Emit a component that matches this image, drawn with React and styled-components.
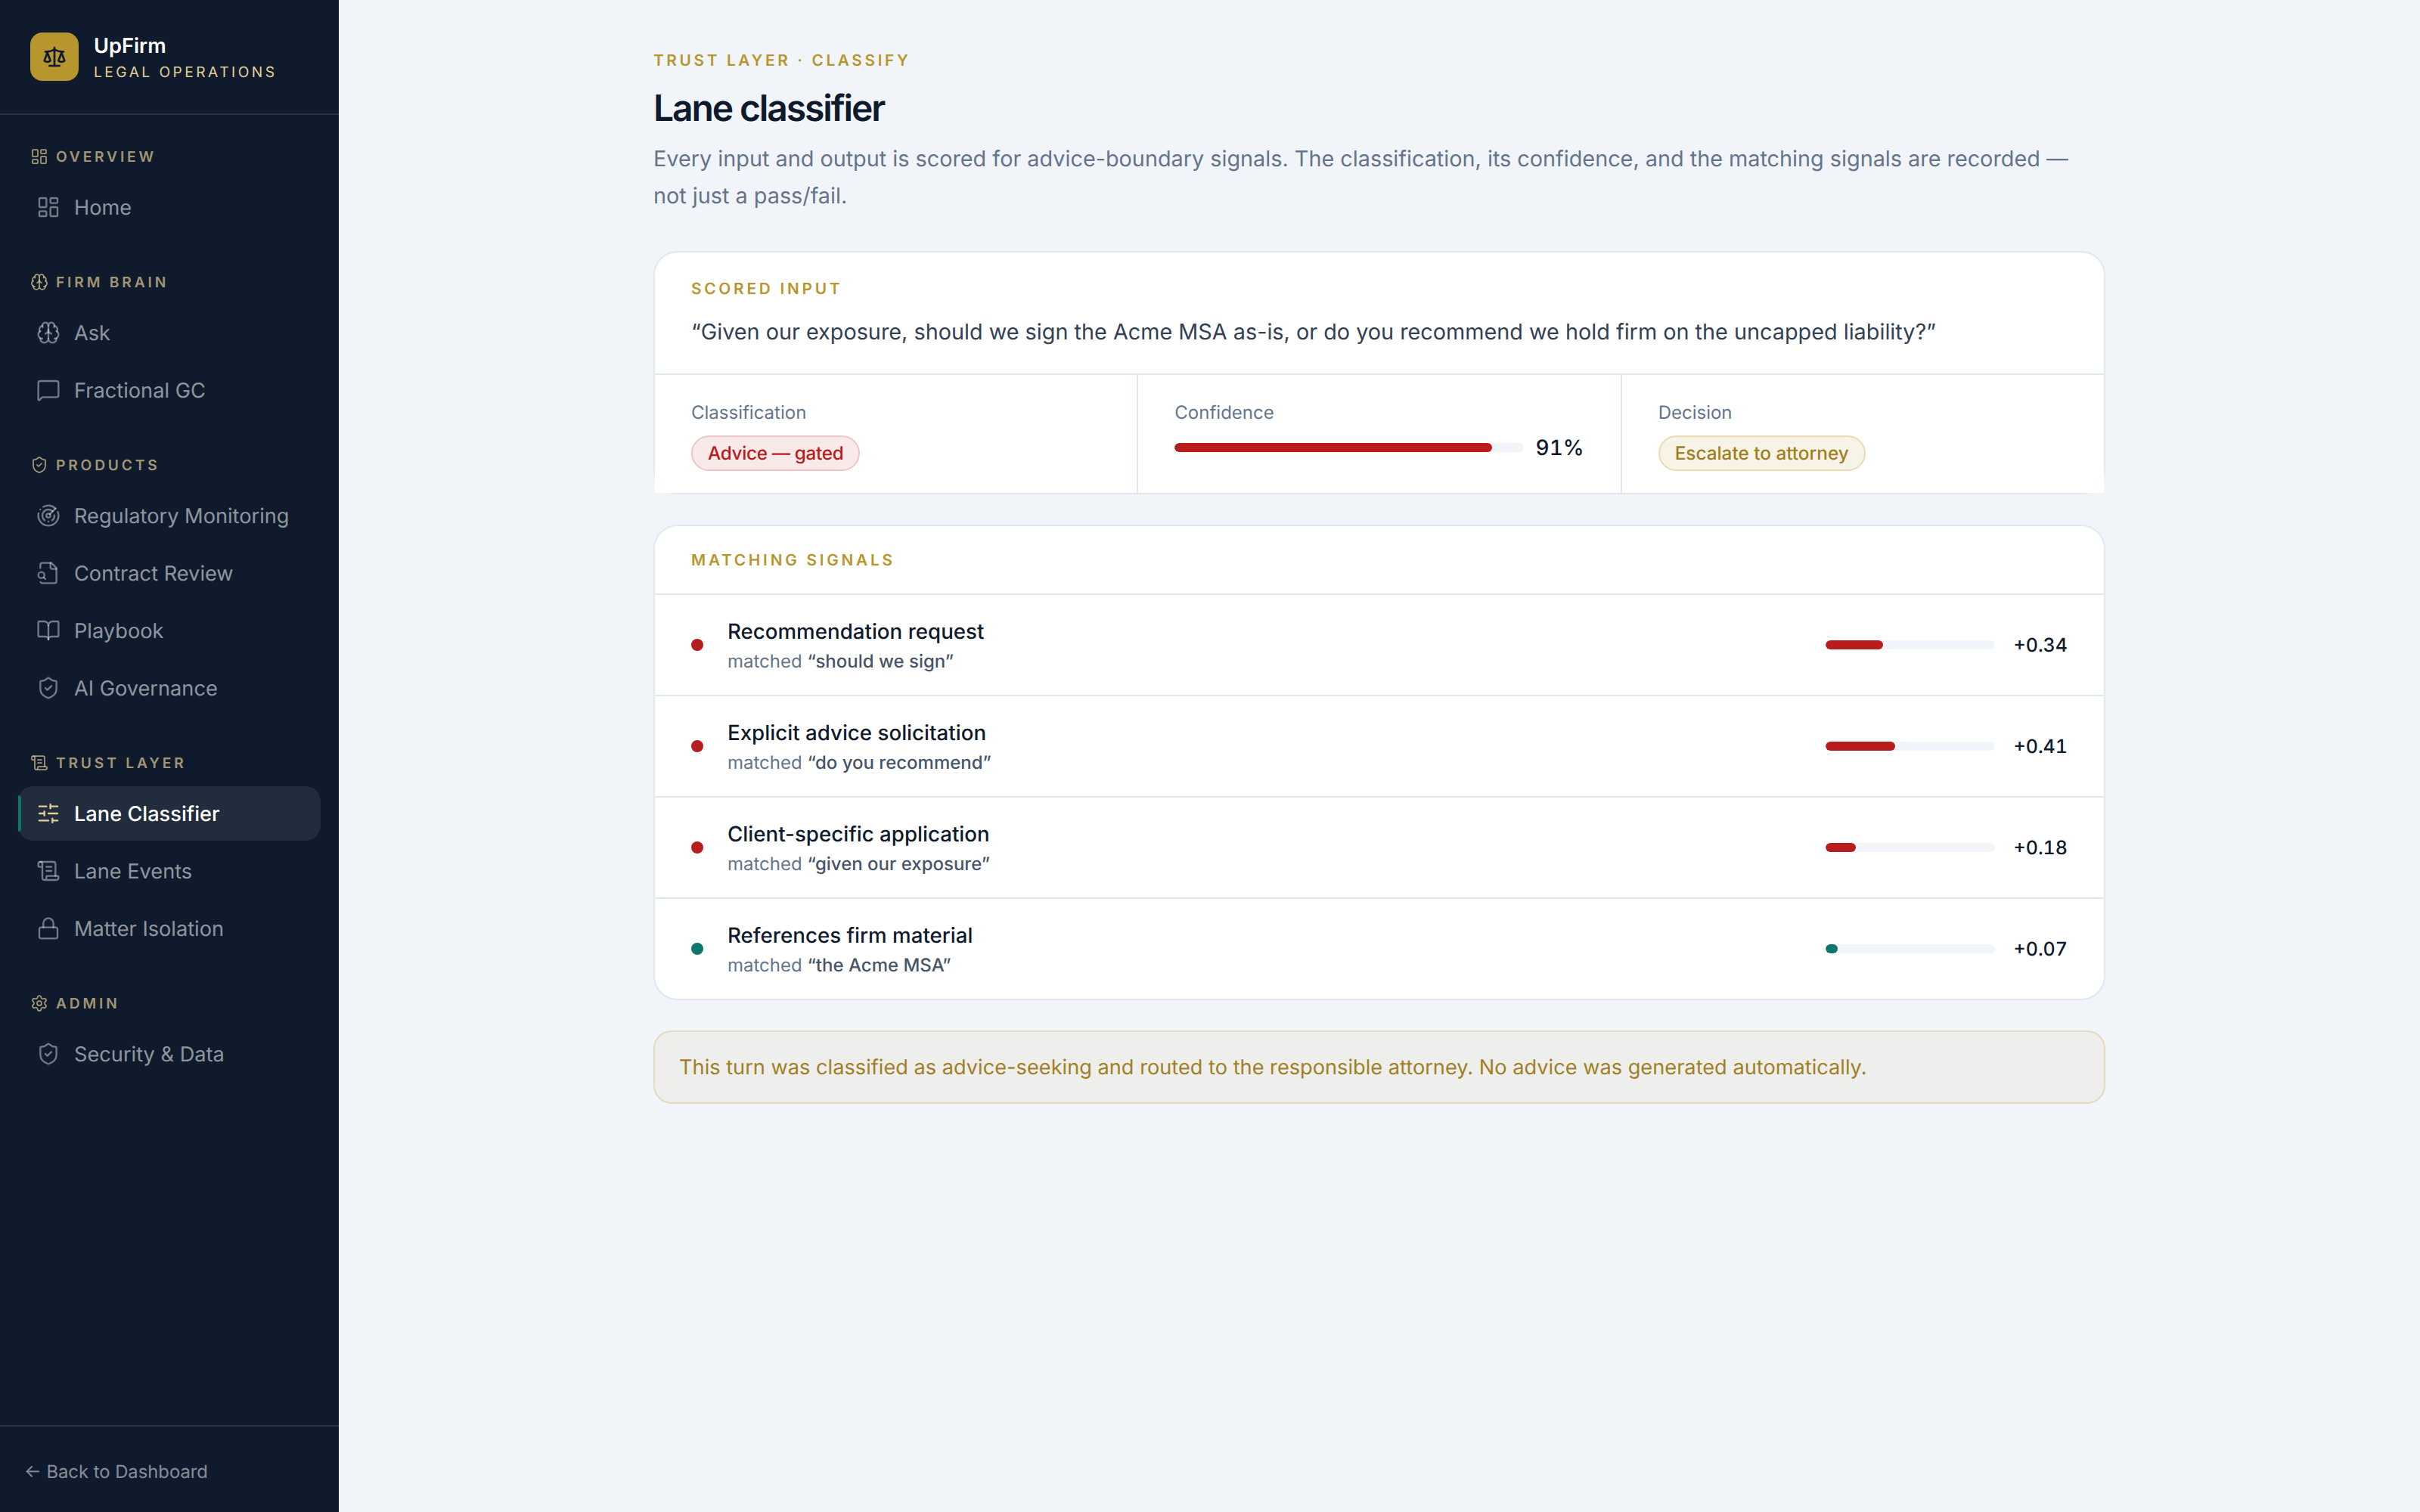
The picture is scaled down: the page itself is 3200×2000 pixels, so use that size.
import React from "react"
import styled, {createGlobalStyle} from "styled-components"
import {
    BookOpen, Brain, LayoutDashboard, Lock, MessageSquare, Radar, Scale, ScrollText,
    Settings, ShieldCheck, SlidersHorizontal
} from "lucide-react"

const GlobalStyle = createGlobalStyle`
  html, body, #root {
    margin: 0;
    padding: 0;
    height: 100%;
  }

  body {
    font-family: Inter, "Noto Sans", sans-serif;
    text-rendering: geometricPrecision;
    background: #f1f5f9;
    color: #0f1b2d;
  }

  * {
    box-sizing: border-box;
  }
`

const Shell = styled.div`
  display: flex;
  width: 100%;
  height: 2000px;
  overflow: hidden;
`

const Sidebar = styled.aside`
  flex: 0 0 448px;
  display: flex;
  flex-direction: column;
  background: #0f1b2d;
`

const Brand = styled.div`
  display: flex;
  align-items: center;
  gap: 20px;
  height: 152px;
  padding: 0 40px;
  border-bottom: 2px solid rgba(255, 255, 255, 0.1);
`

const LogoBox = styled.div`
  width: 64px;
  height: 64px;
  border-radius: 16px;
  background: #b8962e;
  color: #0f1b2d;
  display: flex;
  align-items: center;
  justify-content: center;
`

const BrandName = styled.div`
  font-size: 27.2px;
  line-height: 41px;
  font-weight: 600;
  color: #fff;
`

const BrandSub = styled.div`
  font-size: 19.2px;
  line-height: 29px;
  letter-spacing: 0.18em;
  color: #e2cf97;
`

const Nav = styled.nav`
  padding: 40px 24px 0;
`

const Group = styled.div`
  margin-bottom: 48px;
`

const GroupLabel = styled.div`
  display: flex;
  align-items: center;
  gap: 10px;
  height: 30px;
  margin-bottom: 16px;
  padding-left: 16px;
  font-size: 19.2px;
  font-weight: 600;
  letter-spacing: 0.2em;
  color: rgba(226, 207, 151, 0.7);
`

const NavItem = styled.a`
  position: relative;
  display: flex;
  align-items: center;
  gap: 18px;
  height: 72px;
  margin-bottom: 4px;
  padding: 0 24px;
  border-radius: 20px;
  font-size: 27.2px;
  font-weight: ${p => p.$active ? 500 : 400};
  color: ${p => p.$active ? "#fff" : "rgba(255, 255, 255, 0.55)"};
  background: ${p => p.$active ? "rgba(255, 255, 255, 0.08)" : "transparent"};

  svg {
    color: ${p => p.$active ? "#e2cf97" : "rgba(255, 255, 255, 0.42)"};
  }
`

const ActiveMark = styled.span`
  position: absolute;
  left: 0;
  top: 12px;
  width: 4px;
  height: 48px;
  border-radius: 0 4px 4px 0;
  background: #0f766e;
`

const SidebarFoot = styled.div`
  margin-top: auto;
  padding: 42px 32px 35px;
  border-top: 2px solid rgba(255, 255, 255, 0.1);
  font-size: 23.8px;
  line-height: 36px;
  color: rgba(255, 255, 255, 0.5);
`

const Main = styled.main`
  flex: 1;
  padding-top: 65px;
`

const Column = styled.div`
  width: 1920px;
  margin: 0 auto;
`

const Eyebrow = styled.div`
  font-size: 20.8px;
  line-height: 31px;
  font-weight: 600;
  letter-spacing: 0.175em;
  color: #b8962e;
`

const Title = styled.h1`
  margin: 17px 0 0;
  font-size: 48px;
  line-height: 60px;
  font-weight: 600;
  letter-spacing: -0.044em;
  color: #0f1b2d;
`

const Lead = styled.p`
  margin: 12px 0 0;
  font-size: 28.8px;
  line-height: 49px;
  color: #64748b;
`

const Card = styled.section`
  margin-top: ${p => p.$top}px;
  border: 2px solid #e2e8f0;
  border-radius: 32px;
  background: #fff;
  position: relative;
`

const ScoredHead = styled.div`
  padding: 33px 48px 31px;
`

const CardLabel = styled.div`
  font-size: 20.8px;
  line-height: 31px;
  font-weight: 600;
  letter-spacing: 0.18em;
  color: #b8962e;
`

const Quote = styled.p`
  margin: 16px 0 0;
  font-size: 28.8px;
  line-height: 49px;
  color: #334155;
`

const Stats = styled.div`
  display: grid;
  grid-template-columns: repeat(3, 1fr);
  gap: 2px;
  background: #e2e8f0;
  border-top: 2px solid #e2e8f0;
`

const Stat = styled.div`
  background: #fff;
  padding: 32px 48px;
  height: 156px;
`

const StatLabel = styled.div`
  font-size: 24px;
  line-height: 36px;
  color: #64748b;
`

const Badge = styled.span`
  display: inline-block;
  margin-top: 12px;
  padding: 4px 20px;
  border: 2px solid ${p => p.$border};
  border-radius: 999px;
  background: ${p => p.$bg};
  color: ${p => p.$color};
  font-size: 24.32px;
  line-height: 35px;
  font-weight: 500;
  letter-spacing: ${p => p.$tight ? "-0.014em" : "0"};
`

const ConfidenceRow = styled.div`
  display: flex;
  align-items: center;
  gap: 16px;
  margin-top: 7px;
`

const Track = styled.div`
  flex: ${p => p.$fixed ? "0 0 224px" : 1};
  height: 12px;
  border-radius: 999px;
  background: #f1f5f9;
  overflow: hidden;
`

const Fill = styled.div`
  height: 100%;
  border-radius: 999px;
  background: ${p => p.$color};
`

const Percent = styled.span`
  font-size: 28px;
  line-height: 42px;
  font-weight: 550;
  font-variant-numeric: tabular-nums;
  color: #0f1b2d;
`

const SignalsHead = styled.div`
  padding: 30px 48px 28px;
  border-bottom: 2px solid #e2e8f0;
`

const Signal = styled.div`
  display: flex;
  align-items: center;
  gap: 32px;
  height: ${p => p.$first ? 132 : 134}px;
  padding: 0 48px;
  border-top: ${p => p.$first ? "none" : "2px solid #e2e8f0"};
`

const Dot = styled.span`
  flex: none;
  width: 16px;
  height: 16px;
  border-radius: 50%;
  background: ${p => p.$color};
`

const SignalText = styled.div`
  flex: 1;
`

const SignalName = styled.div`
  font-size: 27.7px;
  line-height: 42px;
  font-weight: 500;
  color: #0f1b2d;
`

const SignalMatch = styled.div`
  margin-top: 1px;
  font-size: 24px;
  line-height: 36px;
  color: #64748b;

  b {
    font-weight: 500;
    color: #475569;
  }
`

const SignalScore = styled.div`
  display: flex;
  align-items: center;
  gap: 24px;
`

const ScoreValue = styled.span`
  width: 72px;
  padding-top: 1px;
  text-align: right;
  font-size: 25px;
  line-height: 36px;
  font-weight: 550;
  font-variant-numeric: tabular-nums;
  color: #0f1b2d;
`

const Notice = styled.div`
  margin-top: 40px;
  padding: 26px 32px;
  border: 2px solid #e5dbb9;
  border-radius: 24px;
  background: #eeefec;
  font-size: 27.2px;
  line-height: 41px;
  color: #a17f24;
`

// doc outline with the magnifier sitting on its lower left edge
const ContractIcon = ({size, strokeWidth}) => (
    <svg width={size} height={size} viewBox="0 0 24 24" fill="none" stroke="currentColor"
         strokeWidth={strokeWidth} strokeLinecap="round" strokeLinejoin="round">
        <path d="M14 2v4a2 2 0 0 0 2 2h4"/>
        <path d="M4.268 21a2 2 0 0 0 1.727 1H18a2 2 0 0 0 2-2V7l-5-5H6a2 2 0 0 0-2 2v3"/>
        <path d="m9 18-1.5-1.5"/>
        <circle cx="5" cy="14" r="3"/>
    </svg>
)

const navGroups = [
    {label: "OVERVIEW", Icon: LayoutDashboard, items: [{name: "Home", Icon: LayoutDashboard}]},
    {
        label: "FIRM BRAIN", Icon: Brain, items: [
            {name: "Ask", Icon: Brain},
            {name: "Fractional GC", Icon: MessageSquare},
        ]
    },
    {
        label: "PRODUCTS", Icon: ShieldCheck, items: [
            {name: "Regulatory Monitoring", Icon: Radar},
            {name: "Contract Review", Icon: ContractIcon},
            {name: "Playbook", Icon: BookOpen},
            {name: "AI Governance", Icon: ShieldCheck},
        ]
    },
    {
        label: "TRUST LAYER", Icon: ScrollText, items: [
            {name: "Lane Classifier", Icon: SlidersHorizontal, active: true},
            {name: "Lane Events", Icon: ScrollText},
            {name: "Matter Isolation", Icon: Lock},
        ]
    },
    {label: "ADMIN", Icon: Settings, items: [{name: "Security & Data", Icon: ShieldCheck}]},
]

const signals = [
    {name: "Recommendation request", match: "should we sign", score: 0.34, color: "#b91c1c"},
    {name: "Explicit advice solicitation", match: "do you recommend", score: 0.41, color: "#b91c1c"},
    {name: "Client-specific application", match: "given our exposure", score: 0.18, color: "#b91c1c"},
    {name: "References firm material", match: "the Acme MSA", score: 0.07, color: "#0f766e"},
]

const App = () => {
    return (
        <Shell>
            <GlobalStyle/>
            <Sidebar>
                <Brand>
                    <LogoBox><Scale size={32} strokeWidth={2}/></LogoBox>
                    <div>
                        <BrandName>UpFirm</BrandName>
                        <BrandSub>LEGAL OPERATIONS</BrandSub>
                    </div>
                </Brand>
                <Nav>
                    {navGroups.map(group => (
                        <Group key={group.label}>
                            <GroupLabel><group.Icon size={24} strokeWidth={1.75}/>{group.label}</GroupLabel>
                            {group.items.map(item => (
                                <NavItem key={item.name} $active={item.active}>
                                    {item.active && <ActiveMark/>}
                                    <item.Icon size={32} strokeWidth={1.75}/>
                                    {item.name}
                                </NavItem>
                            ))}
                        </Group>
                    ))}
                </Nav>
                <SidebarFoot>← Back to Dashboard</SidebarFoot>
            </Sidebar>
            <Main>
                <Column>
                    <Eyebrow>TRUST LAYER · CLASSIFY</Eyebrow>
                    <Title>Lane classifier</Title>
                    <Lead>
                        Every input and output is scored for advice-boundary signals. The classification, its
                        confidence, and the matching signals are recorded — not just a pass/fail.
                    </Lead>

                    <Card $top={49}>
                        <ScoredHead>
                            <CardLabel>SCORED INPUT</CardLabel>
                            <Quote>“Given our exposure, should we sign the Acme MSA as-is, or do you recommend we hold firm on the uncapped liability?”</Quote>
                        </ScoredHead>
                        <Stats>
                            <Stat>
                                <StatLabel>Classification</StatLabel>
                                <Badge $bg="#f9eaea" $border="#eec4c4" $color="#b91c1c" $tight>Advice — gated</Badge>
                            </Stat>
                            <Stat>
                                <StatLabel>Confidence</StatLabel>
                                <ConfidenceRow>
                                    <Track><Fill $color="#b91c1c" style={{width: "91%"}}/></Track>
                                    <Percent>91%</Percent>
                                </ConfidenceRow>
                            </Stat>
                            <Stat>
                                <StatLabel>Decision</StatLabel>
                                <Badge $bg="#f8f3e7" $border="#e9dbb3" $color="#a07f20">Escalate to attorney</Badge>
                            </Stat>
                        </Stats>
                    </Card>

                    <Card $top={40}>
                        <SignalsHead><CardLabel>MATCHING SIGNALS</CardLabel></SignalsHead>
                        {signals.map((signal, i) => (
                            <Signal key={signal.name} $first={i === 0}>
                                <Dot $color={signal.color}/>
                                <SignalText>
                                    <SignalName>{signal.name}</SignalName>
                                    <SignalMatch>matched <b>“{signal.match}”</b></SignalMatch>
                                </SignalText>
                                <SignalScore>
                                    <Track $fixed><Fill $color={signal.color} style={{width: `${signal.score * 100}%`}}/></Track>
                                    <ScoreValue>+{signal.score.toFixed(2)}</ScoreValue>
                                </SignalScore>
                            </Signal>
                        ))}
                    </Card>

                    <Notice>
                        This turn was classified as advice-seeking and routed to the responsible attorney. No advice was
                        generated automatically.
                    </Notice>
                </Column>
            </Main>
        </Shell>
    )
}

export default App
